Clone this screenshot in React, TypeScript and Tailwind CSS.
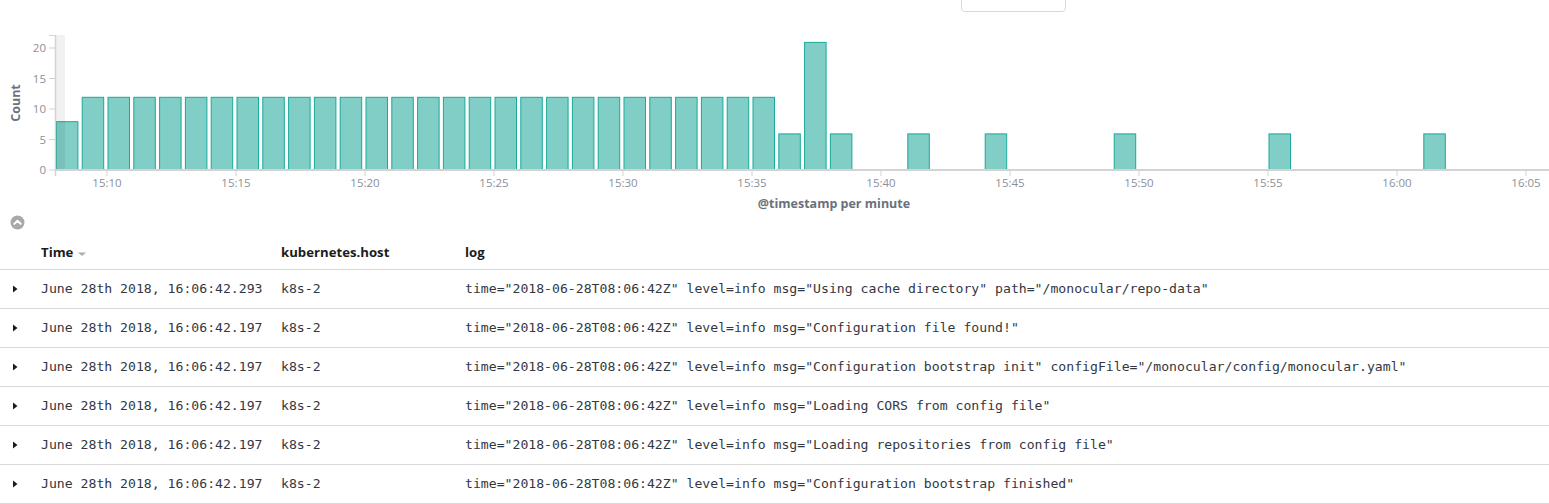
import React from "react";

const X0 = 107;
const PX = 25.8;
const xm = (m: number) => X0 + (m - 10) * PX;
const yv = (v: number) => 170 - v * 6.1;

const bars: [number, number][] = [[8, 8]];
for (let m = 9; m <= 35; m++) bars.push([m, 12]);
bars.push([36, 6], [37, 21], [38, 6], [41, 6], [44, 6], [49, 6], [55, 6], [61, 6]);

const xTicks = [10, 15, 20, 25, 30, 35, 40, 45, 50, 55, 60, 65];
const fmt = (m: number) => {
  const h = 15 + Math.floor(m / 60);
  const mm = m % 60;
  return `${h}:${mm.toString().padStart(2, "0")}`;
};

function Chart() {
  return (
    <svg width={1549} height={215} className="block" style={{ fontFamily: "'Open Sans', sans-serif" }}>
      {bars.map(([m, c]) => {
        let x = xm(m) + 1;
        let w = 21.5;
        if (x < 56.5) {
          w = w - (56.5 - x);
          x = 56.5;
        }
        const y = yv(c);
        return (
          <rect key={m} x={x} y={y + 0.5} width={w} height={170 - y - 0.5} fill="#80cec6" stroke="#1aa99c" strokeWidth={1} />
        );
      })}
      <rect x={56} y={35} width={9} height={135} fill="#000" opacity={0.055} />
      <line x1={55.5} y1={35} x2={55.5} y2={176} stroke="#d3d3d3" strokeWidth={1.5} />
      <line x1={49} y1={35.5} x2={56} y2={35.5} stroke="#d3d3d3" strokeWidth={1} />
      {[0, 5, 10, 15, 20].map((v) => (
        <g key={v}>
          <line x1={49} y1={yv(v)} x2={55} y2={yv(v)} stroke="#d3d3d3" strokeWidth={1} />
          <text x={46} y={yv(v) + 4} textAnchor="end" fontSize={11.5} fill="#8a9099">
            {v}
          </text>
        </g>
      ))}
      <line x1={55} y1={170} x2={1549} y2={170} stroke="#d3d3d3" strokeWidth={2} />
      {xTicks.map((m) => (
        <g key={m}>
          <line x1={xm(m)} y1={170} x2={xm(m)} y2={176} stroke="#d3d3d3" strokeWidth={1} />
          <text x={xm(m)} y={187} textAnchor="middle" fontSize={11.5} fill="#8a9099">
            {fmt(m)}
          </text>
        </g>
      ))}
      <text x={834} y={207.5} textAnchor="middle" fontSize={12.5} fontWeight={700} fill="#6a717d">
        @timestamp per minute
      </text>
      <text
        x={0}
        y={0}
        transform="translate(19.5,103) rotate(-90)"
        textAnchor="middle"
        fontSize={12.5}
        fontWeight={700}
        fill="#6a717d"
      >
        Count
      </text>
    </svg>
  );
}

const rows = [
  'time="2018-06-28T08:06:42Z" level=info msg="Using cache directory" path="/monocular/repo-data"',
  'time="2018-06-28T08:06:42Z" level=info msg="Configuration file found!"',
  'time="2018-06-28T08:06:42Z" level=info msg="Configuration bootstrap init" configFile="/monocular/config/monocular.yaml"',
  'time="2018-06-28T08:06:42Z" level=info msg="Loading CORS from config file"',
  'time="2018-06-28T08:06:42Z" level=info msg="Loading repositories from config file"',
  'time="2018-06-28T08:06:42Z" level=info msg="Configuration bootstrap finished"',
];
const times = [
  "June 28th 2018, 16:06:42.293",
  "June 28th 2018, 16:06:42.197",
  "June 28th 2018, 16:06:42.197",
  "June 28th 2018, 16:06:42.197",
  "June 28th 2018, 16:06:42.197",
  "June 28th 2018, 16:06:42.197",
];

export default function App() {
  return (
    <div className="relative w-[1549px] h-[504px] overflow-hidden bg-white">
      <div className="absolute left-[961px] top-[-2px] w-[105px] h-[14px] rounded-b-[4px] border border-[#d9d9d9] bg-white" />
      <Chart />
      <div className="h-[17px] pl-[10px] flex items-start">
        <svg width={15} height={15} viewBox="0 0 15 15">
          <circle cx={7.5} cy={7.5} r={7} fill="#a9a9a9" />
          <path d="M4.3 8.9 L7.5 5.7 L10.7 8.9" fill="none" stroke="#fff" strokeWidth={2} strokeLinecap="round" strokeLinejoin="round" />
        </svg>
      </div>
      <div
        className="flex h-[38px] pt-[5px] items-center border-b border-[#d9d9d9] text-[13.2px] font-bold text-[#1a1c21]"
        style={{ fontFamily: "'Open Sans', sans-serif" }}
      >
        <div className="w-[41px] shrink-0" />
        <div className="w-[240px] shrink-0 flex items-center">
          Time
          <svg width={10} height={6} viewBox="0 0 10 6" className="ml-[4px] mt-[3px]">
            <path d="M1 1.5 L9 1.5 L5 5 Z" fill="#a8adb5" />
          </svg>
        </div>
        <div className="w-[184px] shrink-0">kubernetes.host</div>
        <div>log</div>
      </div>
      {rows.map((log, i) => (
        <div
          key={i}
          className="flex h-[39px] items-center border-b border-[#d9d9d9] text-[13.15px] text-[#343741] whitespace-pre"
          style={{ fontFamily: "'DejaVu Sans Mono', monospace" }}
        >
          <div className="w-[41px] shrink-0 flex items-center pl-[12px]">
            <svg width={6} height={8} viewBox="0 0 6 8">
              <path d="M1 0.5 L5.5 4 L1 7.5 Z" fill="#1a1c21" />
            </svg>
          </div>
          <div className="w-[240px] shrink-0">{times[i]}</div>
          <div className="w-[184px] shrink-0">k8s-2</div>
          <div>{log}</div>
        </div>
      ))}
    </div>
  );
}
